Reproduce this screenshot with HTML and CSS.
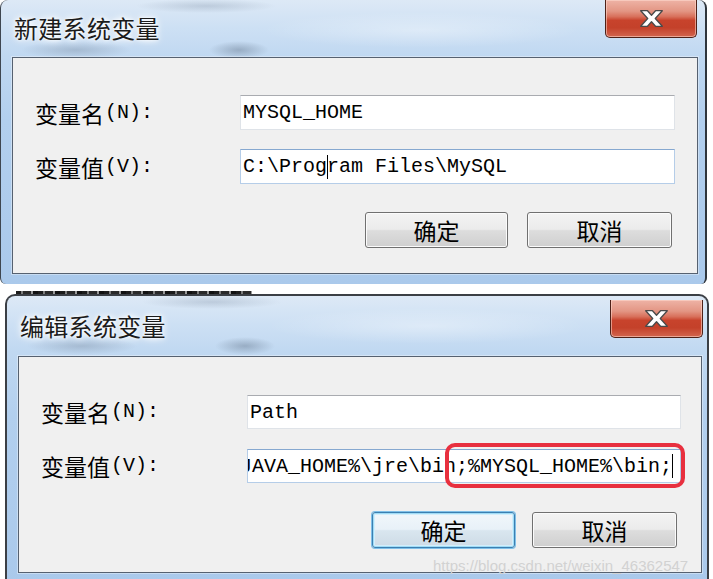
FILE: index.html
```html
<!DOCTYPE html>
<html lang="zh-CN">
<head>
<meta charset="utf-8">
<title>系统变量</title>
<link rel="stylesheet" href="styles.css">
</head>
<body>
<div class="screen">
  <div class="win win1">
    <div class="titlebar">
      <div class="title">新建系统变量</div>
      <div class="close">
        <svg width="23" height="17" viewBox="0 0 23 17"><polygon points="0.7,0.7 7.5,0.7 11.5,5.2 15.5,0.7 22.3,0.7 15.3,8.5 22.3,16.3 15.5,16.3 11.5,11.8 7.5,16.3 0.7,16.3 7.7,8.5" fill="#ffffff" stroke="#4a4a4a" stroke-width="1.3" stroke-linejoin="round"/></svg>
      </div>
    </div>
    <div class="client">
      <div class="form">
        <div class="lbl">变量名<span class="hk">(N):</span></div>
        <div class="field">MYSQL_HOME</div>
        <div class="lbl">变量值<span class="hk">(V):</span></div>
        <div class="field focus">C:\Prog<span class="caret"></span>ram Files\MySQL</div>
      </div>
      <div class="buttons">
        <button class="btn ok">确定</button>
        <button class="btn cancel">取消</button>
      </div>
    </div>
  </div>

  <div class="between"><div class="remnant"></div></div>

  <div class="win win2">
    <div class="titlebar">
      <div class="title">编辑系统变量</div>
      <div class="close">
        <svg width="23" height="17" viewBox="0 0 23 17"><polygon points="0.7,0.7 7.5,0.7 11.5,5.2 15.5,0.7 22.3,0.7 15.3,8.5 22.3,16.3 15.5,16.3 11.5,11.8 7.5,16.3 0.7,16.3 7.7,8.5" fill="#ffffff" stroke="#4a4a4a" stroke-width="1.3" stroke-linejoin="round"/></svg>
      </div>
    </div>
    <div class="client">
      <div class="form">
        <div class="lbl">变量名<span class="hk">(N):</span></div>
        <div class="field">Path</div>
        <div class="lbl">变量值<span class="hk">(V):</span></div>
        <div class="field focus"><span class="scrolled">JAVA_HOME%\jre\bin;%MYSQL_HOME%\bin;<span class="caret"></span></span></div>
      </div>
      <div class="buttons">
        <button class="btn ok default">确定</button>
        <button class="btn cancel">取消</button>
      </div>
      <div class="highlight"></div>
    </div>
    <div class="watermark">https://blog.csdn.net/weixin_46362547</div>
  </div>
</div>
</body>
</html>
```

FILE: styles.css
```css
html, body {
  margin: 0;
  padding: 0;
  background: #ffffff;
}

body {
  width: 713px;
  height: 579px;
  overflow: hidden;
  font-family: "Noto Sans CJK SC", "Liberation Sans", sans-serif;
}

.screen {
  display: flex;
  flex-direction: column;
  width: 713px;
}

.win {
  box-sizing: border-box;
  display: flex;
  flex-direction: column;
  position: relative;
  background:
    radial-gradient(ellipse 55px 9px at 75px 50px, rgba(110, 128, 150, 0.35), transparent 100%),
    radial-gradient(ellipse 30px 9px at 238px 50px, rgba(100, 118, 140, 0.45), transparent 100%),
    radial-gradient(ellipse 70px 7px at 205px 6px, rgba(120, 138, 160, 0.3), transparent 100%),
    radial-gradient(ellipse 160px 18px at 420px 30px, rgba(255, 255, 255, 0.35), transparent 100%),
    linear-gradient(180deg, #dde9f6 0px, #cde0f4 28px, #c0d8f1 56px, #b2cfee 120px, #aac9eb 100%);
}

.win1 {
  width: 707px;
  height: 284px;
  border-left: 1px solid #3e4650;
  border-right: 2px solid #2f353c;
  border-top-left-radius: 8px;
  border-top-right-radius: 8px;
  border-bottom-right-radius: 6px;
  border-bottom-left-radius: 6px;
}

.win2 {
  width: 704px;
  height: 292px;
  margin-left: 5px;
  border-top: 2px solid #3b3f45;
  border-left: 2px solid #3b3f45;
  border-right: 2px solid #3b3f45;
  border-top-left-radius: 10px;
  border-top-right-radius: 10px;
}

.between {
  height: 10px;
  display: flex;
  align-items: flex-end;
}

.remnant {
  margin-left: 16px;
  width: 236px;
  height: 3px;
  background: repeating-linear-gradient(90deg, #1c1c1c 0 5px, #7d7d7d 5px 7px, #2a2a2a 7px 15px, #9a9a9a 15px 17px, #111 17px 22px);
}

.titlebar {
  display: flex;
  justify-content: space-between;
  align-items: flex-start;
}

.win1 .titlebar {
  height: 57px;
}

.win2 .titlebar {
  height: 60px;
}

.title {
  font-size: 24px;
  line-height: 28px;
  color: #1b1b1b;
  letter-spacing: 0.3px;
  text-shadow: 0 0 6px #ffffff, 0 0 10px #ffffff, 0 0 3px #ffffff;
}

.win1 .title {
  padding: 14px 0 0 13px;
}

.win2 .title {
  padding: 16px 0 0 13px;
}

.close {
  box-sizing: border-box;
  height: 38px;
  display: flex;
  align-items: center;
  justify-content: center;
  border: 1px solid #4e2118;
  border-top: none;
  border-radius: 0 0 5px 5px;
  background: linear-gradient(180deg, #eeb3a6 0%, #e39684 30%, #d8705b 45%, #c8432c 55%, #c4412a 75%, #d2664f 100%);
  box-shadow: inset 0 0 0 1px rgba(255, 220, 210, 0.55);
}

.win1 .close {
  width: 92px;
  margin-right: 8px;
}

.win2 .close {
  width: 93px;
  margin-top: 4px;
  margin-right: 4px;
}

.client {
  box-sizing: border-box;
  position: relative;
  height: 217px;
  background: #f0f0f0;
  border: 1px solid #566170;
  box-shadow: 0 0 0 1px rgba(255, 255, 255, 0.35);
  display: flex;
  flex-direction: column;
}

.win1 .client {
  margin-left: 11px;
  width: 686px;
}

.win2 .client {
  margin-left: 11px;
  width: 684px;
}

.form {
  display: grid;
  align-items: center;
  padding-left: 22px;
}

.win1 .form {
  grid-template-columns: 205px 435px;
  grid-auto-rows: 35px;
  row-gap: 19px;
  padding-top: 37px;
}

.win2 .form {
  grid-template-columns: 206px 434px;
  grid-auto-rows: 34px;
  row-gap: 20px;
  padding-top: 38px;
}

.lbl {
  font-size: 23px;
  line-height: 28px;
  color: #000;
  display: flex;
  align-items: center;
}

.hk {
  font-family: "Liberation Mono", monospace;
  font-size: 20px;
  margin-left: 1px;
}

.field {
  box-sizing: border-box;
  height: 100%;
  background: #ffffff;
  border: 1px solid #dfe3e8;
  border-top-color: #a9abb0;
  padding-left: 2px;
  font-family: "Liberation Mono", monospace;
  font-size: 20px;
  color: #000;
  white-space: nowrap;
  overflow: hidden;
  display: flex;
  align-items: center;
}

.field.focus {
  border-color: #b5cde8;
  border-top-color: #86a8d0;
}

.scrolled {
  margin-left: -10px;
  display: flex;
  align-items: center;
}

.caret {
  display: inline-block;
  width: 0;
  height: 24px;
  border-left: 1px solid #000;
  margin-right: -1px;
}

.buttons {
  display: flex;
  justify-content: flex-end;
}

.win1 .buttons {
  margin-top: 28px;
  padding-right: 25px;
  gap: 19px;
}

.win2 .buttons {
  margin-top: 29px;
  padding-right: 24px;
  gap: 17px;
}

.btn {
  box-sizing: border-box;
  height: 36px;
  padding: 0;
  border: 1px solid #707070;
  border-radius: 3px;
  background: linear-gradient(180deg, #f3f3f3 0%, #ebebeb 48%, #dddddd 52%, #cfcfcf 100%);
  box-shadow: inset 0 0 0 1px #fbfbfb;
  font-family: "Noto Sans CJK SC", sans-serif;
  font-size: 23px;
  line-height: 30px;
  color: #000;
}

.btn.ok {
  width: 143px;
}

.btn.cancel {
  width: 145px;
}

.btn.default {
  border-color: #3c7fb1;
  box-shadow: inset 0 0 0 1px #9fdcf6, inset 0 0 0 2px #d4eefb, 0 0 0 1px #7fc0e8;
  background: linear-gradient(180deg, #f1f7fb 0%, #e8f1f8 48%, #d9e6ef 52%, #cddbe6 100%);
}

.highlight {
  position: absolute;
  left: 426px;
  top: 86px;
  width: 240px;
  height: 45px;
  box-sizing: border-box;
  border: 4px solid #e8303f;
  border-radius: 10px;
}

.watermark {
  position: absolute;
  left: 426px;
  top: 261px;
  font-family: "Liberation Sans", sans-serif;
  font-size: 15px;
  color: #d2d2d2;
  white-space: nowrap;
}
```
